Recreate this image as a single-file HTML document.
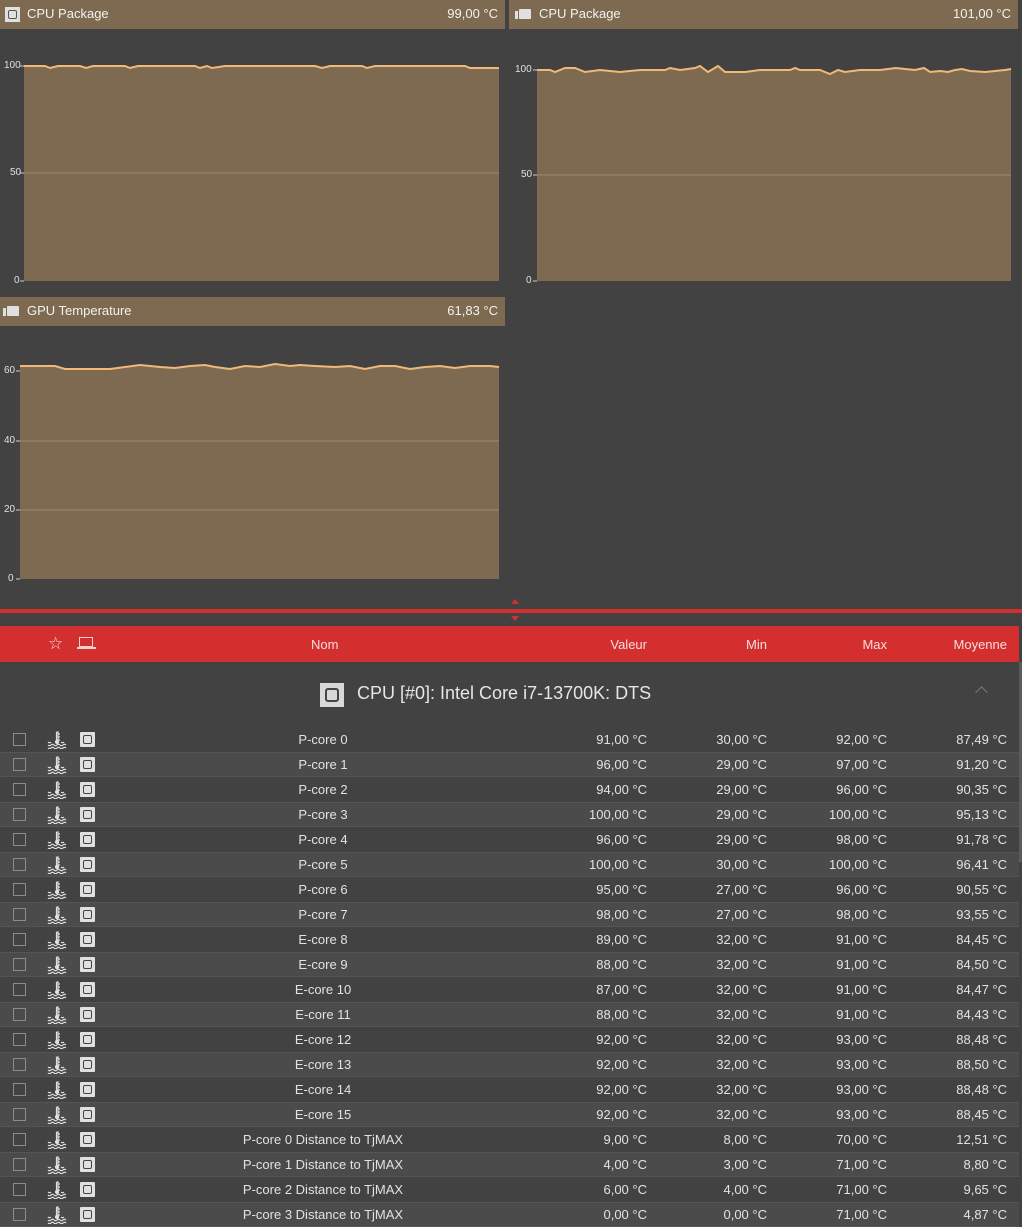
<!DOCTYPE html>
<html><head><meta charset="utf-8"><style>
*{margin:0;padding:0;box-sizing:border-box}
body{width:1022px;height:1225px;background:#424242;font-family:"Liberation Sans",sans-serif;color:#e6e6e6;font-size:13px;position:relative;overflow:hidden}
.abs{position:absolute}
.hdr{position:absolute;background:#7d6a50;height:29px;color:#f2f2f2;font-size:13px}
.hdr .t{position:absolute;left:27px;top:6px}
.hdr .v{position:absolute;right:7px;top:6px}
.ax{position:absolute;font-size:10px;color:#e0e0e0}
.row{position:absolute;left:0;width:1019px;height:25px;color:#e2e2e2}
.row.alt{background:#4b4b4b;box-shadow:inset 0 1px 0 #555,inset 0 -1px 0 #555}
.c{position:absolute;top:5px}
.cb{position:absolute;left:13px;top:6px;width:13px;height:13px;border:1px solid #8c8c8c}
.chip{position:absolute;left:80px;top:5px;width:15px;height:15px;background:#e0e0e0;border-radius:1px}
.chip:after{content:"";position:absolute;left:3px;top:3px;width:9px;height:9px;border:1.5px solid #444;border-radius:2px;box-sizing:border-box}
</style></head><body>

<div class="hdr" style="left:0;top:0;width:505px">
 <div class="abs" style="left:5px;top:7px;width:15px;height:15px;background:#e0e0e0"><div class="abs" style="left:3px;top:3px;width:9px;height:9px;border:1.5px solid #555;border-radius:2px"></div></div>
 <span class="t">CPU Package</span><span class="v">99,00 °C</span></div>
<svg class="abs" style="left:0;top:0" width="1022" height="600">
 <polygon fill="#7d6a50" points="24,66 45,66 50,68 58,66 80,66 86,68 93,66 125,66 130,68 138,66 195,66 200,68 207,66 212,68 225,66 315,66 322,68 330,66 362,66 367,68 375,66 465,66 470,68 499,68 499,281 24,281"/>
 <polyline fill="none" stroke="#f2b877" stroke-width="2" points="24,66 45,66 50,68 58,66 80,66 86,68 93,66 125,66 130,68 138,66 195,66 200,68 207,66 212,68 225,66 315,66 322,68 330,66 362,66 367,68 375,66 465,66 470,68 499,68"/>
 <line x1="24" y1="173" x2="499" y2="173" stroke="#a08c6e" stroke-width="1"/>
 <polygon fill="#7d6a50" points="537,70 550,70 555,72 565,68 575,68 585,72 600,70 620,72 640,70 665,70 670,68 680,70 695,68 700,66 708,72 718,66 725,72 745,72 760,70 790,70 795,68 800,70 820,70 830,74 838,70 845,72 860,70 880,70 888,69 896,68 905,69 915,70 924,68 930,72 940,71 948,72 955,70 962,69 970,71 985,72 995,71 1005,70 1011,69 1011,281 537,281"/>
 <polyline fill="none" stroke="#f2b877" stroke-width="2" points="537,70 550,70 555,72 565,68 575,68 585,72 600,70 620,72 640,70 665,70 670,68 680,70 695,68 700,66 708,72 718,66 725,72 745,72 760,70 790,70 795,68 800,70 820,70 830,74 838,70 845,72 860,70 880,70 888,69 896,68 905,69 915,70 924,68 930,72 940,71 948,72 955,70 962,69 970,71 985,72 995,71 1005,70 1011,69"/>
 <line x1="537" y1="175" x2="1011" y2="175" stroke="#a08c6e" stroke-width="1"/>
 <polygon fill="#7d6a50" points="20,366 55,366 65,369 80,369 110,369 125,367 140,365 160,367 175,368 190,366 205,365 215,367 230,369 245,366 260,367 275,364 290,366 300,365 315,366 335,367 350,366 365,369 380,366 395,366 410,369 425,367 440,366 455,368 470,366 490,366 499,367 499,579 20,579"/>
 <polyline fill="none" stroke="#f2b877" stroke-width="2" points="20,366 55,366 65,369 80,369 110,369 125,367 140,365 160,367 175,368 190,366 205,365 215,367 230,369 245,366 260,367 275,364 290,366 300,365 315,366 335,367 350,366 365,369 380,366 395,366 410,369 425,367 440,366 455,368 470,366 490,366 499,367"/>
 <line x1="20" y1="441" x2="499" y2="441" stroke="#a08c6e"/><line x1="20" y1="510" x2="499" y2="510" stroke="#a08c6e"/>
 <g stroke="#ccc"><line x1="20" y1="66" x2="24" y2="66"/><line x1="20" y1="173" x2="24" y2="173"/><line x1="20" y1="281" x2="24" y2="281"/>
 <line x1="533" y1="70" x2="537" y2="70"/><line x1="533" y1="175" x2="537" y2="175"/><line x1="533" y1="281" x2="537" y2="281"/>
 <line x1="16" y1="371" x2="20" y2="371"/><line x1="16" y1="441" x2="20" y2="441"/><line x1="16" y1="510" x2="20" y2="510"/><line x1="16" y1="579" x2="20" y2="579"/></g>
</svg>
<div class="ax" style="left:4px;top:60px">100</div><div class="ax" style="left:10px;top:167px">50</div><div class="ax" style="left:14px;top:275px">0</div>
<div class="ax" style="left:515px;top:64px">100</div><div class="ax" style="left:521px;top:169px">50</div><div class="ax" style="left:526px;top:275px">0</div>
<div class="ax" style="left:4px;top:365px">60</div><div class="ax" style="left:4px;top:435px">40</div><div class="ax" style="left:4px;top:504px">20</div><div class="ax" style="left:8px;top:573px">0</div>

<div class="hdr" style="left:509px;top:0;width:509px">
 <div class="abs" style="left:6px;top:11px;width:3px;height:8px;background:#e0e0e0"></div><div class="abs" style="left:10px;top:9px;width:12px;height:10px;background:#e0e0e0;border-radius:1px"></div>
 <span class="t" style="left:30px">CPU Package</span><span class="v">101,00 °C</span></div>
<div class="hdr" style="left:0;top:297px;width:505px">
 <div class="abs" style="left:3px;top:11px;width:3px;height:8px;background:#e0e0e0"></div><div class="abs" style="left:7px;top:9px;width:12px;height:10px;background:#e0e0e0;border-radius:1px"></div>
 <span class="t">GPU Temperature</span><span class="v">61,83 °C</span></div>

<div class="abs" style="left:0;top:609px;width:1022px;height:4px;background:#d32f2f"></div>
<div class="abs" style="left:511px;top:599px;width:0;height:0;border-left:4px solid transparent;border-right:4px solid transparent;border-bottom:5px solid #d32f2f"></div>
<div class="abs" style="left:511px;top:616px;width:0;height:0;border-left:4px solid transparent;border-right:4px solid transparent;border-top:5px solid #d32f2f"></div>

<div class="abs" style="left:0;top:626px;width:1019px;height:36px;background:#d32f2f;color:#f7dede;font-size:13px">
 <span class="abs" style="left:48px;top:8px;font-size:17px">☆</span>
 <div class="abs" style="left:79px;top:11px;width:14px;height:10px;border:1.5px solid #f2d0d0"></div><div class="abs" style="left:77px;top:21px;width:19px;height:2px;background:#f2d0d0"></div>
 <span class="abs" style="left:311px;top:11px">Nom</span>
 <span class="abs" style="right:372px;top:11px">Valeur</span>
 <span class="abs" style="right:252px;top:11px">Min</span>
 <span class="abs" style="right:132px;top:11px">Max</span>
 <span class="abs" style="right:12px;top:11px">Moyenne</span>
</div>
<div class="abs" style="left:1019px;top:662px;width:3px;height:200px;background:#5a5a5a"></div>

<div class="abs" style="left:320px;top:683px;width:24px;height:24px;background:#d8d8d8"><div class="abs" style="left:5px;top:5px;width:14px;height:14px;border:2px solid #444;border-radius:3px"></div></div>
<div class="abs" style="left:357px;top:683px;font-size:18px;color:#e6e6e6">CPU [#0]: Intel Core i7-13700K: DTS</div>
<div class="abs" style="left:977px;top:688px;width:9px;height:9px;border-left:1.5px solid #777;border-top:1.5px solid #777;transform:rotate(45deg)"></div>

<div id="rows"></div>
<script>
var d=[["P-core 0","91,00","30,00","92,00","87,49"],["P-core 1","96,00","29,00","97,00","91,20"],["P-core 2","94,00","29,00","96,00","90,35"],["P-core 3","100,00","29,00","100,00","95,13"],["P-core 4","96,00","29,00","98,00","91,78"],["P-core 5","100,00","30,00","100,00","96,41"],["P-core 6","95,00","27,00","96,00","90,55"],["P-core 7","98,00","27,00","98,00","93,55"],["E-core 8","89,00","32,00","91,00","84,45"],["E-core 9","88,00","32,00","91,00","84,50"],["E-core 10","87,00","32,00","91,00","84,47"],["E-core 11","88,00","32,00","91,00","84,43"],["E-core 12","92,00","32,00","93,00","88,48"],["E-core 13","92,00","32,00","93,00","88,50"],["E-core 14","92,00","32,00","93,00","88,48"],["E-core 15","92,00","32,00","93,00","88,45"],["P-core 0 Distance to TjMAX","9,00","8,00","70,00","12,51"],["P-core 1 Distance to TjMAX","4,00","3,00","71,00","8,80"],["P-core 2 Distance to TjMAX","6,00","4,00","71,00","9,65"],["P-core 3 Distance to TjMAX","0,00","0,00","71,00","4,87"]];
var th='<svg class="abs" style="left:47px;top:4px" width="20" height="18" viewBox="0 0 20 18" fill="none" stroke="#e0e0e0" stroke-width="1.2"><path d="M9.5 1v9M9.5 1h1.5v9M11 3h2M11 6h2M11 9h2"/><path d="M1 11q1.5 1.5 3 0M14 11q1.5 1.5 3 0M1 14q1.5 1.5 3 0t3 0t3 0t3 0t3 0t3 0M1 17q1.5 1.5 3 0t3 0t3 0t3 0t3 0t3 0"/><circle cx="10" cy="11" r="1.5" fill="#e0e0e0"/></svg>';
var h='';d.forEach(function(r,i){h+='<div class="row'+(i%2?' alt':'')+'" style="top:'+(727+i*25)+'px"><div class="cb"></div>'+th+'<div class="chip"></div><span class="c" style="left:0;width:646px;text-align:center">'+r[0]+'</span><span class="c" style="right:372px">'+r[1]+' °C</span><span class="c" style="right:252px">'+r[2]+' °C</span><span class="c" style="right:132px">'+r[3]+' °C</span><span class="c" style="right:12px">'+r[4]+' °C</span></div>'});
document.getElementById('rows').innerHTML=h;
</script>
</body></html>
